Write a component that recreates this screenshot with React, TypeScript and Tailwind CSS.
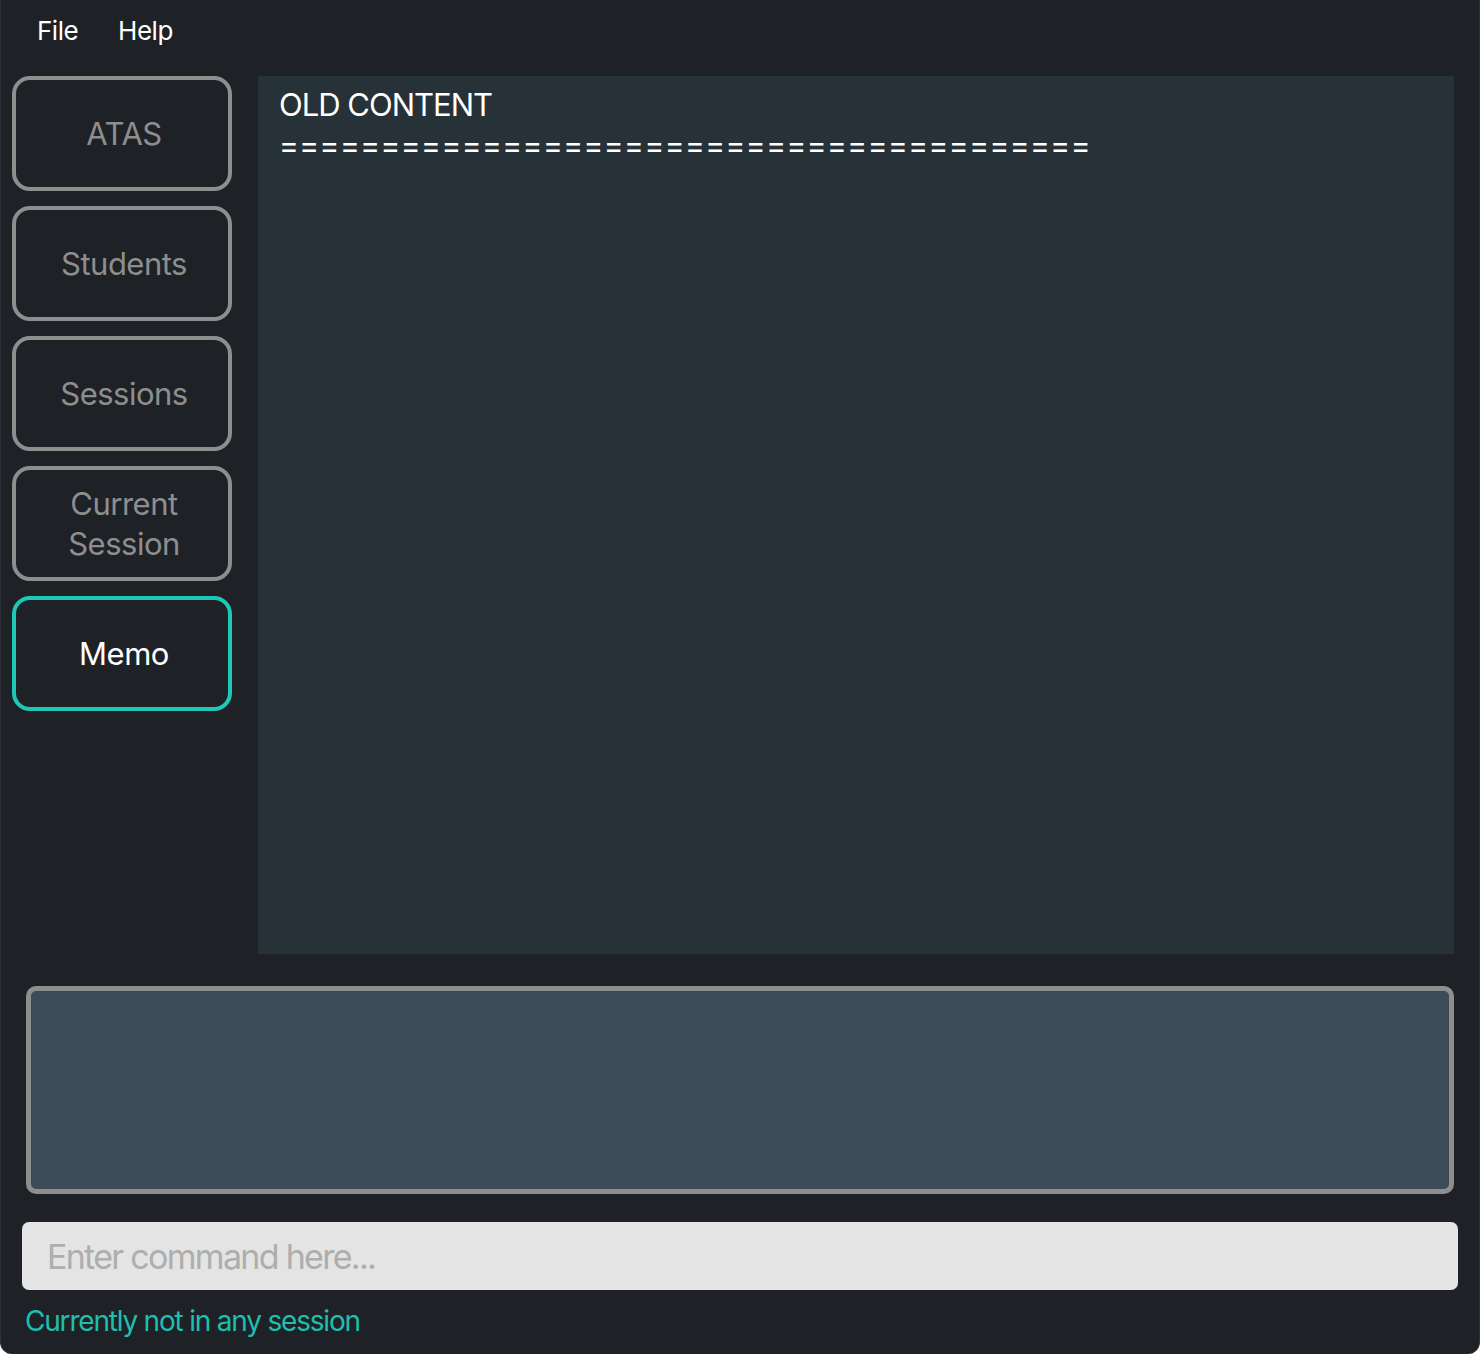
import React from "react";

const font = { fontFamily: "Inter, 'Noto Sans', sans-serif" };

function NavButton({ label, active }: { label: React.ReactNode; active?: boolean }) {
  return (
    <div
      className={
        "w-[220px] h-[115px] rounded-[18px] border-[4px] flex items-center justify-center pl-[4px] text-center text-[31px] leading-[40px] tracking-[-0.5px] " +
        (active ? "border-[#1fc8b6] text-white" : "border-[#8e8e8e] text-[#8e8e8e]")
      }
    >
      {label}
    </div>
  );
}

export default function App() {
  return (
    <div
      className="w-[1480px] h-[1354px] bg-[#1e2227] border-x border-[#2d3137] rounded-b-[12px] flex flex-col overflow-hidden"
      style={font}
    >
      <div className="h-[60px] flex items-center pl-[36px] gap-[40px] text-white text-[26px] tracking-[-0.5px]">
        <span>File</span>
        <span>Help</span>
      </div>
      <div className="flex pt-[16px] pl-[11px]">
        <div className="flex flex-col gap-[15px]">
          <NavButton label="ATAS" />
          <NavButton label="Students" />
          <NavButton label="Sessions" />
          <NavButton label={<span>Current<br />Session</span>} />
          <NavButton label="Memo" active />
        </div>
        <div className="ml-[26px] w-[1196px] h-[878px] bg-[#263238] px-[21px] pt-[10px] text-white">
          <div className="text-[31px] leading-[38px] tracking-[-1px]">OLD CONTENT</div>
          <div className="text-[30px] leading-[42px] tracking-[0.45px]">
            {"========================================"}
          </div>
        </div>
      </div>
      <div className="mt-[32px] ml-[25px] w-[1428px] h-[208px] rounded-[10px] border-[5px] border-[#8e8e8e] bg-[#3d4b59]" />
      <div className="mt-[28px] ml-[21px] w-[1436px] h-[68px] rounded-[7px] bg-[#e4e4e4] flex items-center pl-[25px] text-[34px] text-[#aeaeae] tracking-[-1.7px]">
        Enter command here...
      </div>
      <div className="ml-[24px] mt-[10px] text-[28px] text-[#1fbfae] tracking-[-1.2px]">
        Currently not in any session
      </div>
    </div>
  );
}
